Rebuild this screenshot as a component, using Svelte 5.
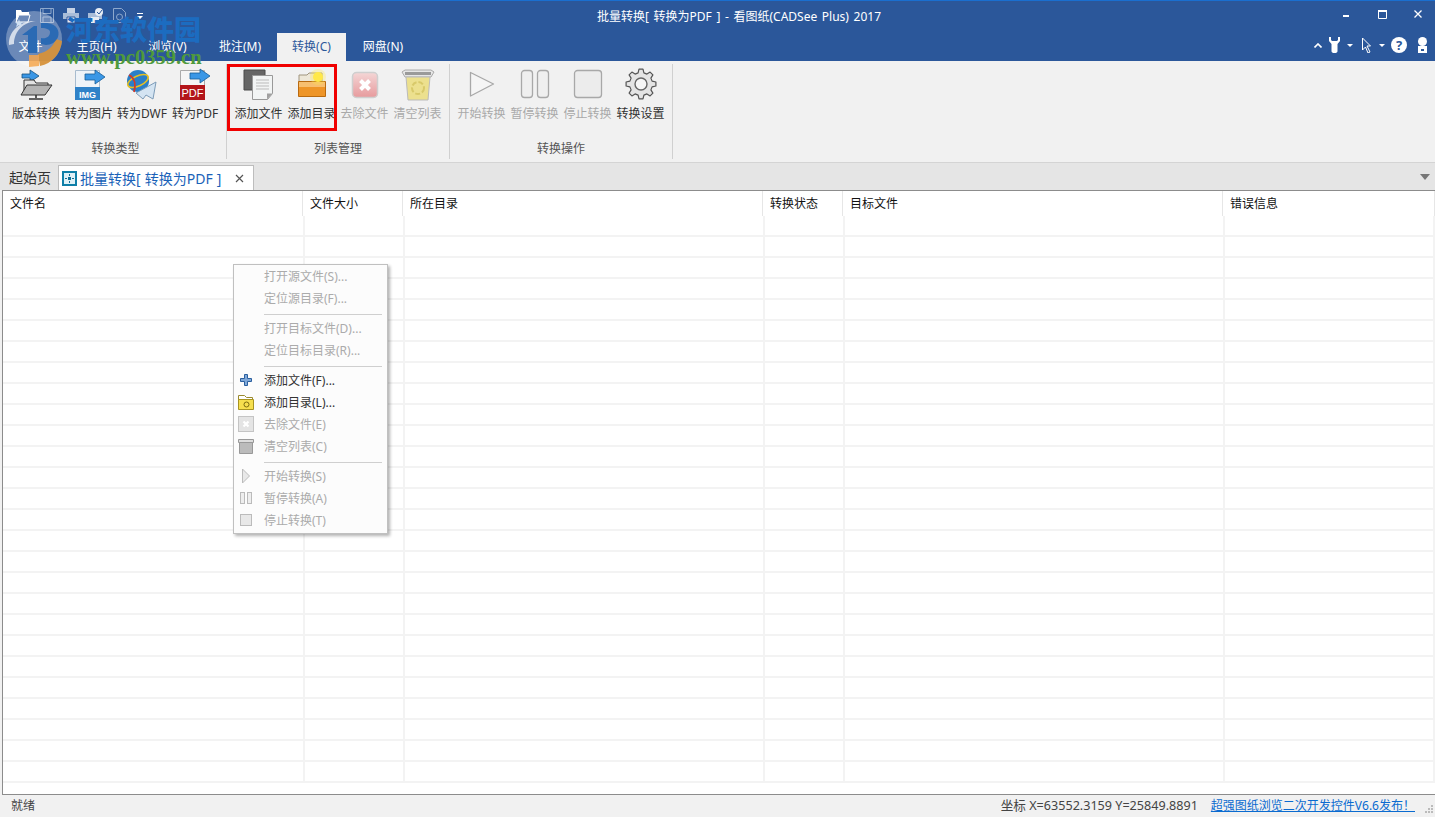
<script>
const tabs = [
  { label: '文件', w: 61 },
  { label: '主页(H)', w: 71 },
  { label: '浏览(V)', w: 71 },
  { label: '批注(M)', w: 74 },
  { label: '转换(C)', w: 69, active: true },
  { label: '网盘(N)', w: 74 }
]

const groups = [
  { title: '转换类型', width: 222, items: [
    { label: '版本转换', icon: 'version' },
    { label: '转为图片', icon: 'img' },
    { label: '转为DWF', icon: 'dwf' },
    { label: '转为PDF', icon: 'pdf' }
  ] },
  { title: '列表管理', width: 223, marked: true, items: [
    { label: '添加文件', icon: 'file' },
    { label: '添加目录', icon: 'folder' },
    { label: '去除文件', icon: 'remove', off: true },
    { label: '清空列表', icon: 'bin', off: true }
  ] },
  { title: '转换操作', width: 223, items: [
    { label: '开始转换', icon: 'play', off: true },
    { label: '暂停转换', icon: 'pause', off: true },
    { label: '停止转换', icon: 'stop', off: true },
    { label: '转换设置', icon: 'gear' }
  ] }
]

const columns = [
  { label: '文件名', w: 302, hw: 300 },
  { label: '文件大小', w: 100, hw: 100 },
  { label: '所在目录', w: 360, hw: 360 },
  { label: '转换状态', w: 80, hw: 80 },
  { label: '目标文件', w: 380, hw: 380 },
  { label: '错误信息', w: 210, hw: 212 }
]

const rows = Array.from({ length: 27 })

const menu = [
  { label: '打开源文件(S)...', off: true },
  { label: '定位源目录(F)...', off: true },
  { sep: true },
  { label: '打开目标文件(D)...', off: true },
  { label: '定位目标目录(R)...', off: true },
  { sep: true },
  { label: '添加文件(F)...', icon: 'plus' },
  { label: '添加目录(L)...', icon: 'folder' },
  { label: '去除文件(E)', off: true, icon: 'remove' },
  { label: '清空列表(C)', off: true, icon: 'bin' },
  { sep: true },
  { label: '开始转换(S)', off: true, icon: 'play' },
  { label: '暂停转换(A)', off: true, icon: 'pause' },
  { label: '停止转换(T)', off: true, icon: 'stop' }
]

// 8-tooth gear outline for the settings button
function gearPath(cx, cy, outer, inner, teeth) {
  let d = ''
  const step = (Math.PI * 2) / teeth
  for (let i = 0; i < teeth; i++) {
    const a = i * step - Math.PI / 2
    const pts = [
      [inner, a - step * 0.32],
      [outer, a - step * 0.17],
      [outer, a + step * 0.17],
      [inner, a + step * 0.32]
    ]
    for (const [r, t] of pts) {
      d += (d ? 'L' : 'M') + (cx + r * Math.cos(t)).toFixed(1) + ' ' + (cy + r * Math.sin(t)).toFixed(1)
    }
  }
  return d + 'Z'
}
const gear = gearPath(18, 16, 15, 11.5, 8)
</script>

{#snippet ribbonIcon(name)}
  <svg width="36" height="34" viewBox="0 0 36 34">
    {#if name === 'version'}
      <path d="M4 6h8V2l9 6-9 6v-4H4z" fill="#3a97e6" stroke="#14507f" stroke-width=".8"/>
      <path d="M6 12h10l2 3h12v8H6z" fill="#e2e2e2" stroke="#333"/>
      <path d="M3 27l6-10h25l-7 10z" fill="#b4b4b4" stroke="#333"/>
      <path d="M18 27v3M11 31h14" stroke="#333" stroke-width="1.600"/>
    {:else if name === 'img'}
      <path d="M4.500 2.500h24v29h-24z" fill="#eef3f8" stroke="#a8bccf"/>
      <path d="M4 19h25v13H4z" fill="#2f82c8"/>
      <text x="16.500" y="30" class="badge">IMG</text>
      <path d="M14 6h10V2l10 7-10 7v-4H14z" fill="#3a97e6" stroke="#175d98" stroke-width=".8"/>
    {:else if name === 'dwf'}
      <circle cx="14" cy="13" r="11" fill="#2a7fc8"/>
      <ellipse cx="14" cy="13" rx="11" ry="5" fill="none" stroke="#e8c020" stroke-width="1.600" transform="rotate(-25 14 13)"/>
      <path d="M5 7c6 3 7 10 5 17" fill="none" stroke="#d03a2a" stroke-width="1.800"/>
      <path d="M12 25l20-11-3 17-7-4-3 4z" fill="#d4e4f2" stroke="#7d9cb8"/>
    {:else if name === 'pdf'}
      <path d="M3.500 2.500h24v29h-24z" fill="#f5f5f5" stroke="#aaa"/>
      <path d="M3 17h25v15H3z" fill="#b3151a"/>
      <text x="15.500" y="29" class="badge big">PDF</text>
      <path d="M13 5h10V1l10 7-10 7v-4H13z" fill="#3a97e6" stroke="#175d98" stroke-width=".8"/>
    {:else if name === 'file'}
      <path d="M3 2h21v20H3z" fill="#666" stroke="#4a4a4a"/>
      <path d="M11.500 7.500h20v18l-5 6h-15z" fill="#f2f4f4" stroke="#999"/>
      <path d="M15 12h13M15 15h13M15 18h13M15 21h13" stroke="#bbb"/>
      <path d="M26 31.500v-6h5.500z" fill="#a0a0a0"/>
    {:else if name === 'folder'}
      <path d="M5 7h8l2-2h13v9H5z" fill="#ede7d8" stroke="#a0957e"/>
      <path d="M4.500 13.500h27v15h-27z" fill="#ee9528" stroke="#b96a10"/>
      <path d="M5 14h26v5H5z" fill="#f7bf70"/>
      <circle cx="24" cy="9" r="5" fill="#ffe94a"/>
      <circle cx="24" cy="9" r="8" fill="#ffe94a" opacity=".3"/>
    {:else if name === 'remove'}
      <defs><linearGradient id="rm" x1="0" y1="0" x2="0" y2="1"><stop offset="0" stop-color="#f4d6d6"/><stop offset="1" stop-color="#e79a9d"/></linearGradient></defs>
      <rect x="5.500" y="4.500" width="25" height="25" rx="4" fill="url(#rm)" stroke="#cfcfcf" stroke-width="1.500"/>
      <path d="M13.500 12.500l9 9M22.500 12.500l-9 9" stroke="#fff" stroke-width="4"/>
    {:else if name === 'bin'}
      <path d="M2 4l3-2h26l3 2-3 5H5z" fill="#e6e6e6" stroke="#aaa"/>
      <path d="M6 9h24l-2 23H8z" fill="#ece08e" stroke="#bbb"/>
      <path d="M5 4h26v3H5z" fill="#9a9a9a"/>
      <circle cx="18" cy="20" r="6" fill="none" stroke="#d8c96a" stroke-width="2" stroke-dasharray="5 2"/>
    {:else if name === 'play'}
      <path d="M6.500 4.500l23 11.500-23 12z" fill="#f5f5f5" stroke="#a8a8a8" stroke-width="1.300" stroke-linejoin="round"/>
    {:else if name === 'pause'}
      <rect x="4.500" y="2.500" width="11" height="27" rx="3" fill="#efefef" stroke="#a8a8a8" stroke-width="1.300"/>
      <rect x="20.500" y="2.500" width="11" height="27" rx="3" fill="#efefef" stroke="#a8a8a8" stroke-width="1.300"/>
    {:else if name === 'stop'}
      <rect x="4.500" y="2.500" width="27" height="27" rx="3" fill="#ececec" stroke="#a8a8a8" stroke-width="1.300"/>
    {:else if name === 'gear'}
      <path d={gear} fill="#e4e4e4" stroke="#555" stroke-width="1.200" stroke-linejoin="round"/>
      <circle cx="18" cy="16" r="6" fill="#f6f6f6" stroke="#666" stroke-width="1.400"/>
    {/if}
  </svg>
{/snippet}

{#snippet menuIcon(name)}
  <svg width="18" height="18" viewBox="0 0 18 18">
    {#if name === 'plus'}
      <path d="M7.500 3.500h3v4h4v3h-4v4h-3v-4h-4v-3h4z" fill="#7fa8d8" stroke="#2b5f9e"/>
    {:else if name === 'folder'}
      <path d="M1.500 2.500h6l2 2h6v4h-14z" fill="#fff" stroke="#9a8a30"/>
      <path d="M1.500 6.500h15v10h-15z" fill="#f6df4e" stroke="#a89420"/>
      <circle cx="9.500" cy="11.500" r="2.500" fill="none" stroke="#7a6a10"/>
    {:else if name === 'remove'}
      <rect x="1.500" y="1.500" width="15" height="15" fill="#e4e4e4" stroke="#c4c4c4"/>
      <path d="M6.500 6.500l5 5M11.500 6.500l-5 5" stroke="#fff" stroke-width="2.200"/>
    {:else if name === 'bin'}
      <path d="M1.500 2.500h15v3h-15z" fill="#ddd" stroke="#999"/>
      <path d="M2.500 5.500h13v11h-13z" fill="#bbb" stroke="#999"/>
    {:else if name === 'play'}
      <path d="M5.500 2l7 7-7 7z" fill="#e8e8e8" stroke="#bbb"/>
    {:else if name === 'pause'}
      <rect x="3.500" y="3.500" width="4" height="11" fill="#eee" stroke="#bbb"/>
      <rect x="10.500" y="3.500" width="4" height="11" fill="#eee" stroke="#bbb"/>
    {:else if name === 'stop'}
      <rect x="3.500" y="3.500" width="11" height="11" fill="#e8e8e8" stroke="#bbb"/>
    {/if}
  </svg>
{/snippet}

<div class="app">
  <header class="top">
    <div class="title-row">
      <div class="quick">
        <svg width="16" height="15" viewBox="0 0 16 15"><path d="M1 2h5l1 2h7v3H4l-3 7z" fill="#fff"/><path d="M4 7h11l-2 7H1z" fill="none" stroke="#fff"/></svg>
        <svg width="14" height="15" viewBox="0 0 14 15"><path d="M.5.500h13v14H.500zM3 .500v5h8v-5M3 9h8v5.500H3z" fill="none" stroke="#8ea8cc"/></svg>
        <svg width="16" height="15" viewBox="0 0 16 15"><path d="M4 0h8v5H4z" fill="#c6d2e4"/><path d="M0 5h16v6H0z" fill="#a9bdd8"/><path d="M4 9h8v6H4z" fill="#e8edf4" stroke="#2b579a"/></svg>
        <svg width="16" height="15" viewBox="0 0 16 15"><path d="M0 5h14v6H0z" fill="#a9bdd8"/><path d="M3 9h8v6H3z" fill="#e8edf4"/><circle cx="11" cy="4" r="4" fill="#e8edf4"/><path d="M9 4l2 2 3-4" stroke="#2b579a" fill="none"/></svg>
        <svg width="13" height="15" viewBox="0 0 13 15"><path d="M.5.500h8l4 4v10H.5z" fill="none" stroke="#8ea8cc"/><circle cx="6.500" cy="9" r="3" fill="none" stroke="#8ea8cc"/></svg>
        <svg class="more" width="6" height="6" viewBox="0 0 6 6"><path d="M0 0h6v1H0zM0 3h6L3 6z" fill="#fff"/></svg>
      </div>
      <div class="title">批量转换[ 转换为PDF ] - 看图纸(CADSee Plus) 2017</div>
      <div class="window-btns">
        <svg class="min" width="6" height="2" viewBox="0 0 6 2"><path d="M0 0h6v2H0z" fill="#fff"/></svg>
        <svg width="9" height="9" viewBox="0 0 9 9"><path d="M.5 1.500h8v7h-8z" fill="none" stroke="#fff"/><path d="M0 0h9v2H0z" fill="#fff"/></svg>
        <svg width="8" height="8" viewBox="0 0 8 8"><path d="M.5.500l7 7M7.500.500l-7 7" stroke="#fff" stroke-width="1.300"/></svg>
      </div>
    </div>
    <div class="tab-row">
      <nav class="tabs">
        {#each tabs as tab}
          <button class="tab" class:active={tab.active} style="width: {tab.w}px">{tab.label}</button>
        {/each}
      </nav>
      <div class="tools">
        <svg width="8" height="5" viewBox="0 0 8 5"><path d="M.5 4.500L4 1l3.500 3.500" fill="none" stroke="#fff" stroke-width="1.600"/></svg>
        <svg class="wrench" width="11" height="16" viewBox="0 0 11 16"><path d="M0 0h2v3l1 1h5l1-1V0h2v4L8.500 7v7a3 2 0 0 1-6 0V7L0 4z" fill="#fff"/></svg>
        <svg class="drop" width="6" height="3" viewBox="0 0 6 3"><path d="M0 0h6L3 3z" fill="#fff"/></svg>
        <svg class="cursor" width="10" height="16" viewBox="0 0 10 16"><path d="M.5 1l8 8H5l3 6-2 1-2.500-6L.5 13z" fill="#2b579a" stroke="#fff"/></svg>
        <svg class="drop" width="6" height="3" viewBox="0 0 6 3"><path d="M0 0h6L3 3z" fill="#fff"/></svg>
        <div class="help">?</div>
        <svg class="lock" width="11" height="16" viewBox="0 0 11 16"><circle cx="5.500" cy="4.500" r="4.500" fill="#fff"/><path d="M1 9h9v7H1z" fill="#fff"/><path d="M4 12h3v2H4z" fill="#2b579a"/></svg>
      </div>
    </div>
  </header>

  <div class="watermark" aria-hidden="true">
    <svg class="wm-logo" width="58" height="56" viewBox="0 0 58 56">
      <circle cx="29" cy="28" r="28" fill="#fff" opacity=".3"/>
      <path d="M57 30a28 28 0 0 1-22 25l-2-12c9-2 15-7 18-15z" fill="#d6913a" opacity=".95"/>
      <path d="M24 56V44h10v11z" fill="#f4a64c" opacity=".85"/>
      <path d="M4 34C3 20 16 9 31 10 19 11 9 20 9 33z" fill="#fff" opacity=".7"/>
      <path d="M17 24l12-9h3v27h-9V24z" fill="#2a6ab4"/>
      <path d="M36 12h6c10 1 13 8 11 14-2 5-7 8-12 8l-5-1v-6c5 1 9-1 9-6 0-2-3-4-9-4z" fill="#2a6ab4"/>
      <path d="M14 8l1 3h3l-2 2 1 3-3-2-3 2 1-3-2-2h3z" fill="#cfe0f2"/>
    </svg>
    <div class="wm-cn">河东软件园</div>
    <div class="wm-url">www.pc0359.cn</div>
  </div>

  <section class="ribbon">
    {#each groups as group}
      <div class="group" style="width: {group.width}px">
        <div class="buttons">
          {#each group.items as item}
            <div class="rb" class:off={item.off}>
              {@render ribbonIcon(item.icon)}
              <span>{item.label}</span>
            </div>
          {/each}
        </div>
        <div class="group-title">{group.title}</div>
        {#if group.marked}<div class="marker"></div>{/if}
      </div>
    {/each}
  </section>

  <div class="doc-tabs">
    <div class="doc plain">起始页</div>
    <div class="doc current">
      <svg width="15" height="15" viewBox="0 0 15 15"><path d="M0 0h15v15H0z" fill="#0f7fa8"/><path d="M2 2h11v11H2z" fill="#dff0f6"/><path d="M6 6h3v3H6z" fill="#0f6f96"/><path d="M7.500 3v2M7.500 10v2M3 7.500h2M10 7.500h2" stroke="#0f6f96"/></svg>
      <span>批量转换[ 转换为PDF ]</span>
      <svg class="close" width="9" height="9" viewBox="0 0 9 9"><path d="M1 1l7 7M8 1l-7 7" stroke="#555" stroke-width="1.200"/></svg>
    </div>
    <svg class="doc-arrow" width="10" height="6" viewBox="0 0 10 6"><path d="M0 0h10L5 6z" fill="#777"/></svg>
  </div>

  <main class="list">
    <div class="head">
      {#each columns as col}
        <div class="hcell" style="width: {col.hw}px">{col.label}</div>
      {/each}
    </div>
    <div class="body">
      {#each rows as _}
        <div class="row">
          {#each columns as col}
            <div class="cell" style="width: {col.w}px"></div>
          {/each}
        </div>
      {/each}
    </div>

    <div class="menu">
      {#each menu as item}
        {#if item.sep}
          <div class="sep"></div>
        {:else}
          <div class="mi" class:off={item.off}>
            <span class="mi-icon">{#if item.icon}{@render menuIcon(item.icon)}{/if}</span>
            <span>{item.label}</span>
          </div>
        {/if}
      {/each}
    </div>
  </main>

  <footer class="status">
    <span>就绪</span>
    <span class="coords">坐标 X=63552.3159 Y=25849.8891</span>
    <span class="link">超强图纸浏览二次开发控件V6.6发布！</span>
    <svg class="grip" width="8" height="8" viewBox="0 0 8 8"><path d="M6 0h2v2H6zM3 3h2v2H3zM6 3h2v2H6zM0 6h2v2H0zM3 6h2v2H3zM6 6h2v2H6z" fill="#bbb"/></svg>
  </footer>
</div>

<style>
:global(body) {
  margin: 0;
  overflow: hidden;
}
.app {
  position: relative;
  width: 1435px;
  height: 817px;
  display: flex;
  flex-direction: column;
  font-family: "Noto Sans", "Noto Sans CJK SC", sans-serif;
  font-size: 12px;
  color: #333;
  background: #f1f1f1;
  overflow: hidden;
}
.top {
  height: 61px;
  flex: none;
  background: #2b579a;
  border-top: 1px solid #1a6fd0;
  box-sizing: border-box;
  color: #fff;
}
.title-row {
  height: 32px;
  display: flex;
  align-items: center;
  position: relative;
}
.quick {
  display: flex;
  align-items: center;
  gap: 9px;
  padding-left: 15px;
  margin-top: -3px;
}
.more {
  margin-left: 2px;
}
.title {
  position: absolute;
  left: 597px;
  top: 7px;
  line-height: 18px;
  white-space: nowrap;
  word-spacing: 1.500px;
}
.window-btns {
  margin-left: auto;
  display: flex;
  align-items: center;
  gap: 27px;
  padding-right: 13px;
  margin-top: -6px;
}
.min {
  margin-right: 2px;
  margin-top: 3px;
}
.tab-row {
  height: 28px;
  display: flex;
  justify-content: space-between;
}
.tabs {
  display: flex;
}
.tab {
  height: 28px;
  border: none;
  background: none;
  color: #fff;
  font: inherit;
  padding: 0 0 2px;
}
.tab.active {
  background: #f1f1f1;
  color: #2b579a;
}
.tools {
  display: flex;
  align-items: center;
  padding: 0 7px 4px 0;
}
.tools .wrench {
  margin-left: 7px;
}
.tools .drop {
  margin-left: 7px;
}
.tools .cursor {
  margin-left: 9px;
}
.help {
  width: 16px;
  height: 16px;
  margin-left: 6px;
  border-radius: 50%;
  background: #fff;
  color: #2b579a;
  font-weight: bold;
  font-size: 13px;
  line-height: 16px;
  text-align: center;
}
.tools .lock {
  margin-left: 10px;
}
.watermark {
  position: absolute;
  left: 0;
  top: 0;
  width: 210px;
  height: 70px;
  pointer-events: none;
}
.wm-logo {
  position: absolute;
  left: 5px;
  top: 11px;
}
.wm-cn {
  position: absolute;
  left: 66px;
  top: 12px;
  font-family: "Noto Sans CJK SC", sans-serif;
  font-size: 27px;
  line-height: 34px;
  font-weight: 900;
  color: #1c6cc0;
  white-space: nowrap;
}
.wm-url {
  position: absolute;
  left: 66px;
  top: 46px;
  font-family: "Liberation Serif", serif;
  font-size: 20.500px;
  line-height: 22px;
  font-weight: bold;
  color: #4f9a3c;
  white-space: nowrap;
}
.ribbon {
  height: 102px;
  flex: none;
  display: flex;
  box-sizing: border-box;
  padding: 3px 0 0 5px;
  background: #f1f1f1;
  border-bottom: 1px solid #d4d4d4;
}
.group {
  position: relative;
  height: 95px;
  flex: none;
  box-sizing: border-box;
  border-right: 1px solid #d0d0d0;
  display: flex;
  flex-direction: column;
  align-items: center;
}
.buttons {
  display: flex;
  height: 71px;
}
.rb {
  width: 53px;
  display: flex;
  flex-direction: column;
  align-items: center;
  white-space: nowrap;
  padding-top: 4px;
}
.rb span {
  line-height: 18px;
  margin-top: 3px;
}
.rb.off span {
  color: #a9a9a9;
}
.group-title {
  line-height: 18px;
  margin-top: 5px;
  color: #555;
}
.badge {
  font-family: "Liberation Sans", sans-serif;
  font-size: 9px;
  font-weight: bold;
  fill: #fff;
  text-anchor: middle;
}
.badge.big {
  font-size: 11px;
  font-weight: normal;
}
.marker {
  position: absolute;
  left: 0;
  top: 0;
  width: 110px;
  height: 67px;
  box-sizing: border-box;
  border: 3px solid #f00000;
}
.doc-tabs {
  height: 27px;
  flex: none;
  position: relative;
  display: flex;
  align-items: flex-end;
  background: #e5e5e5;
  font-size: 14px;
}
.doc {
  height: 25px;
  line-height: 25px;
  box-sizing: border-box;
}
.plain {
  width: 58px;
  padding-left: 9px;
  color: #333;
}
.current {
  width: 196px;
  display: flex;
  align-items: center;
  padding-left: 3px;
  background: #fff;
  border: 1px solid #bdbdbd;
  border-bottom: none;
  color: #1a62b8;
}
.current span {
  margin-left: 3px;
  word-spacing: .5px;
}
.close {
  margin-left: auto;
  margin-right: 9px;
}
.doc-arrow {
  position: absolute;
  right: 5px;
  top: 11px;
}
.list {
  position: relative;
  flex: 1;
  min-height: 0;
  box-sizing: border-box;
  margin-left: 2px;
  background: #fff;
  border-top: 1px solid #8c8c8c;
  border-bottom: 1px solid #8c8c8c;
  border-left: 1px solid #8c8c8c;
  overflow: hidden;
}
.head {
  display: flex;
  height: 25px;
}
.hcell {
  flex: none;
  box-sizing: border-box;
  padding-left: 7px;
  line-height: 26px;
  color: #111;
  border-right: 1px solid #e6e6e6;
}
.row {
  display: flex;
  height: 21px;
  box-sizing: border-box;
  border-bottom: 2px solid #f3f3f3;
}
.cell {
  flex: none;
  box-sizing: border-box;
  border-right: 2px solid #f3f3f3;
}
.menu {
  position: absolute;
  left: 230px;
  top: 73px;
  width: 155px;
  height: 270px;
  box-sizing: border-box;
  background: #fcfcfc;
  border: 1px solid #c0c0c0;
  box-shadow: 2px 2px 3px rgba(0, 0, 0, .3);
}
.mi {
  height: 22px;
  display: flex;
  align-items: center;
  color: #333;
  white-space: nowrap;
}
.mi.off {
  color: #ababab;
}
.mi-icon {
  width: 18px;
  height: 18px;
  margin: 0 9px 0 3px;
  flex: none;
}
.sep {
  height: 8px;
  margin: 0 5px 0 30px;
  box-sizing: border-box;
  border-bottom: 1px solid #cfcfcf;
  transform: translateY(-2px);
}
.status {
  height: 22px;
  flex: none;
  display: flex;
  align-items: center;
  padding-left: 11px;
  padding-right: 2px;
  color: #444;
  line-height: 22px;
}
.coords {
  margin-left: auto;
  font-size: 12.600px;
}
.link {
  margin-left: 13px;
  color: #0a6bd0;
  text-decoration: underline;
}
.grip {
  margin: 5px 0 0 10px;
}
</style>
